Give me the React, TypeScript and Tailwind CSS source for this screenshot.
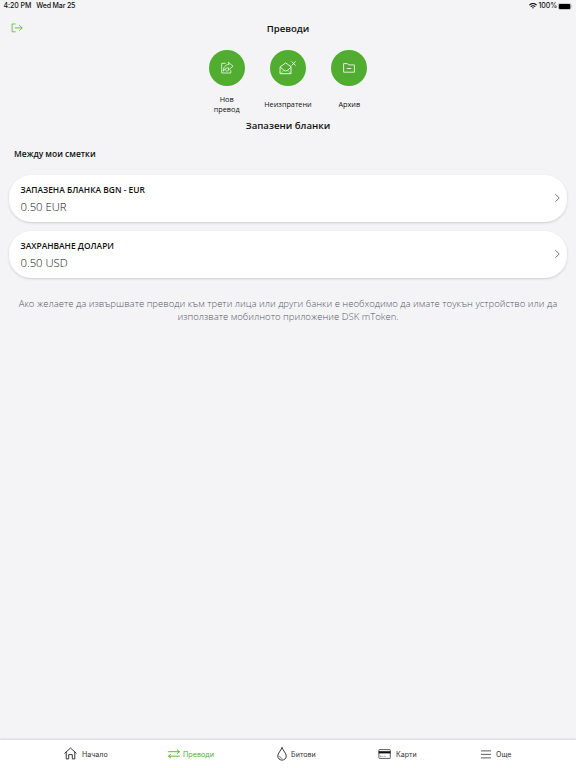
import React from 'react';

const ShareIcon = () => (
  <svg width="14" height="14" viewBox="0 0 14 14" fill="none" stroke="white" strokeWidth="0.75" strokeLinejoin="round" strokeLinecap="round">
    <path d="M5.4 2.3H1.7V12H10.8V9.6" />
    <path d="M8.6 1.4L13 5.2L8.6 9V6.9C6 6.7 4.4 7.8 3.4 10.2C3.2 6.4 5.2 3.7 8.6 3.5Z" />
    <path d="M5.6 8.4L6.2 10.1L8.5 9.7" strokeWidth="0.6" />
  </svg>
);

const EnvelopeIcon = () => (
  <svg width="18" height="16" viewBox="0 0 18 16" fill="none" stroke="white" strokeWidth="0.85" strokeLinejoin="round" strokeLinecap="round">
    <path d="M1.4 6.7L6.7 2.9L12 6.7V13.7H1.4Z" />
    <path d="M1.6 7.4L5 10.4L6.7 11.1L8.4 10.4L11.8 7.4" />
    <path d="M1.8 13.4L4.6 10.6M11.6 13.4L8.8 10.6" strokeWidth="0.5" />
    <path d="M12.9 1.7L16.3 5.3M16.3 1.7L12.9 5.3" />
  </svg>
);

const FolderIcon = () => (
  <svg width="14" height="12" viewBox="0 0 14 12" fill="none" stroke="white" strokeWidth="0.8" strokeLinejoin="round" strokeLinecap="round">
    <path d="M1.6 9.8V1.6H5.4L6.6 2.9H12.4V9.8Z" />
    <path d="M5.2 6.5H8.9" />
  </svg>
);

const actions = [
  { icon: <ShareIcon />, label: 'Нов превод', width: 'w-[34px]' },
  { icon: <EnvelopeIcon />, label: 'Неизпратени', width: 'w-[60px]' },
  { icon: <FolderIcon />, label: 'Архив', width: 'w-[60px]' },
];

const templates = [
  { name: 'ЗАПАЗЕНА БЛАНКА BGN - EUR', amount: '0.50 EUR' },
  { name: 'ЗАХРАНВАНЕ ДОЛАРИ', amount: '0.50 USD' },
];

function StatusBar() {
  return (
    <div className="flex h-3 items-center justify-between pl-[3.5px] pr-[3px] font-['Inter',sans-serif] text-[7px] font-medium leading-3 text-[#111]">
      <div className="flex gap-[5px]">
        <span className="tracking-[-0.08px]">4:20 PM</span>
        <span className="tracking-[-0.15px]">Wed Mar 25</span>
      </div>
      <div className="flex items-center">
        <svg width="8" height="6" viewBox="0 0 8 6" fill="none" stroke="#111" strokeWidth="1.1">
          <path d="M0.4 2.2C2.5 0.2 5.5 0.2 7.6 2.2M1.7 3.7C3 2.4 5 2.4 6.3 3.7" />
          <path d="M3 4.6Q4 3.9 5 4.6L4 5.7Z" fill="#111" stroke="none" />
        </svg>
        <span className="ml-[2px] mr-[1px] tracking-[-0.1px]">100%</span>
        <svg width="15" height="7" viewBox="0 0 15 7">
          <rect x="0.3" y="0.3" width="12.6" height="6.2" rx="1.6" fill="none" stroke="#999" strokeWidth="0.5" />
          <rect x="0.9" y="0.9" width="11.4" height="5" rx="1" fill="#000" />
          <path d="M13.6 2.3Q14.6 3.4 13.6 4.5Z" fill="#999" />
        </svg>
      </div>
    </div>
  );
}

function TabBar() {
  return (
    <nav className="grid h-7 grid-cols-[104px_109px_101px_103px_auto] bg-white pl-16 pt-px font-['Inter',sans-serif] text-[7.1px] leading-[27px] text-[#333] shadow-[0_-1px_2px_rgba(0,0,0,0.12)]">
      <div className="flex items-center gap-[5px]">
        <svg width="13" height="13" viewBox="0 0 13 13" className="mb-[2px]" fill="none" stroke="#222" strokeWidth="0.9" strokeLinejoin="round" strokeLinecap="round">
          <path d="M0.8 6.2L6.5 1L12.2 6.2M2.2 5.2V11.9H4.7V7.6H8.3V11.9H10.8V5.2" />
        </svg>
        <span>Начало</span>
      </div>
      <div className="flex items-center gap-[3px] text-[#52ae30]">
        <svg width="12" height="10" viewBox="0 0 12 10" className="mb-px" fill="none" stroke="currentColor" strokeWidth="0.9" strokeLinecap="round" strokeLinejoin="round">
          <path d="M0.6 2.7H11.4M9.4 0.9L11.4 2.7L9.4 4.4M11.4 7.2H0.6M2.6 5.4L0.6 7.2L2.6 8.9" />
        </svg>
        <span className="tracking-[0.06px]">Преводи</span>
      </div>
      <div className="flex items-center gap-[4px]">
        <svg width="10" height="14" viewBox="0 0 10 14" className="mb-px" fill="none" stroke="#222" strokeWidth="0.9" strokeLinecap="round">
          <path d="M5 0.8C3.6 4 0.8 6.3 0.8 9C0.8 11.4 2.6 13.1 5 13.1S9.2 11.4 9.2 9C9.2 6.3 6.4 4 5 0.8Z" />
          <path d="M2.7 9.3C2.8 10.5 3.6 11.3 4.8 11.4" strokeWidth="0.6" />
        </svg>
        <span className="tracking-[0.08px]">Битови</span>
      </div>
      <div className="flex items-center gap-[5px]">
        <svg width="13" height="10" viewBox="0 0 13 10" className="mb-px">
          <rect x="0.9" y="0.6" width="11.4" height="8.8" rx="0.6" fill="white" stroke="#333" strokeWidth="0.8" />
          <path d="M0.7 2.2H12.4V4.4H0.7Z" fill="#111" />
          <path d="M2.1 7.3H5.3M6.3 7.3H8" stroke="#555" strokeWidth="0.7" strokeDasharray="1 0.4" />
        </svg>
        <span>Карти</span>
      </div>
      <div className="flex items-center gap-[5px]">
        <svg width="10" height="9" viewBox="0 0 10 9" className="mb-px" stroke="#333" strokeWidth="0.8">
          <path d="M0 0.9H10M0 4.4H10M0 7.9H10" />
        </svg>
        <span>Още</span>
      </div>
    </nav>
  );
}

export default function App() {
  return (
    <div className="flex h-[768px] w-[576px] flex-col overflow-hidden bg-[#f4f4f6] font-['Open_Sans',sans-serif] text-[#111]">
      <StatusBar />
      <header className="grid h-[38px] grid-cols-[1fr_auto_1fr] items-center px-[11px] pb-[5px]">
        <svg width="12" height="10" viewBox="0 0 12 10" className="mb-px" fill="none" stroke="#65bb46" strokeWidth="0.9" strokeLinecap="round" strokeLinejoin="round">
          <path d="M4.2 1H1.1V8.8H4.2M4.2 4.9H11.1M8.4 2.3L11.1 4.9L8.4 7.5" />
        </svg>
        <h1 className="text-[9.6px] font-semibold leading-4">Преводи</h1>
        <span />
      </header>

      <div className="flex justify-center">
        {actions.map((action) => (
          <div key={action.label} className="flex w-[61.3px] flex-col items-center">
            <div className="flex size-9 items-center justify-center rounded-full bg-[#50ad30]">{action.icon}</div>
            <div className="mt-2 flex h-5 items-center">
              <p className={`${action.width} text-center text-[7.3px] leading-[10px]`}>{action.label}</p>
            </div>
          </div>
        ))}
      </div>

      <h2 className="mt-1 text-center text-[9.65px] font-semibold leading-4">Запазени бланки</h2>
      <h3 className="mt-3 pl-[14px] text-[8.45px] font-semibold leading-4">Между мои сметки</h3>

      <div className="mx-[9px] mt-[12.6px] flex flex-col gap-[9px]">
        {templates.map((item) => (
          <div key={item.name} className="flex h-[47px] items-center justify-between rounded-[22px] bg-white pl-[11.5px] pr-[6px] shadow-[0_1px_2.5px_rgba(0,0,0,0.16)]">
            <div>
              <p className="text-[8.42px] font-semibold leading-4">{item.name}</p>
              <p className="mt-[1px] text-[11.3px] font-light leading-4 text-[#111]">{item.amount}</p>
            </div>
            <svg width="7" height="10" viewBox="0 0 7 10" className="mb-px" fill="none" stroke="#777" strokeWidth="1">
              <path d="M1.4 1.2L5.2 5L1.4 8.8" />
            </svg>
          </div>
        ))}
      </div>

      <p className="mt-[19.4px] text-center text-[9.55px] font-light leading-[13px] text-[#555868]">
        Ако желаете да извършвате преводи към трети лица или други банки е необходимо да имате тоукън устройство или да
        <br />
        използвате мобилното приложение DSK mToken.
      </p>
      <div className="flex-1" />
      <TabBar />
    </div>
  );
}
